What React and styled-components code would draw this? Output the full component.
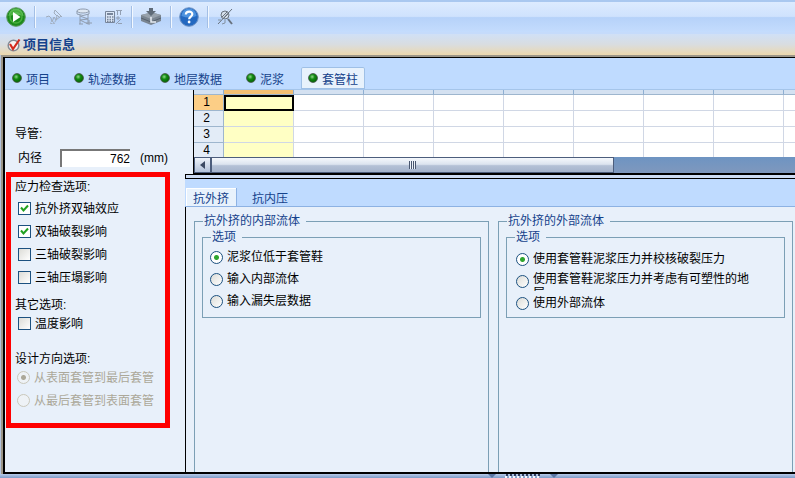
import { useState } from "react";
import styled, { createGlobalStyle } from "styled-components";

const mainTabs = ["项目", "轨迹数据", "地层数据", "泥浆", "套管柱"];
const detailTabs = ["抗外挤", "抗内压"];
const columns = Array.from({ length: 24 }, (_, i) => i);
const rows = [1, 2, 3, 4];

const stressOptions = [
  { id: "biaxial-collapse", label: "抗外挤双轴效应", on: true },
  { id: "biaxial-burst", label: "双轴破裂影响", on: true },
  { id: "triaxial-burst", label: "三轴破裂影响", on: false },
  { id: "triaxial-collapse", label: "三轴压塌影响", on: false },
];
const insideFluids = ["泥浆位低于套管鞋", "输入内部流体", "输入漏失层数据"];
const outsideFluids = ["使用套管鞋泥浆压力并校核破裂压力", "使用套管鞋泥浆压力并考虑有可塑性的地层", "使用外部流体"];

function RunIcon() {
  return (
    <svg width="20" height="20" viewBox="0 0 20 20">
      <circle cx="10" cy="10" r="9.3" fill="#1c8a1c" stroke="#5f9a62" />
      <path d="M2.5 9a7.5 7.5 0 0 1 15 0q-7.5-2-15 0z" fill="#5cbb54" />
      <circle cx="10" cy="10" r="6" fill="none" stroke="#49b03e" strokeWidth="1.5" />
      <path d="M7 5l7.5 5L7 15z" fill="#fff" />
    </svg>
  );
}

function PathIcon() {
  return (
    <svg width="18" height="18" viewBox="0 0 18 18" fill="none" stroke="#a0acbc">
      <path d="M1 9l3-1 2 2 1 4 2-5 2 3 1-4" />
      <path d="M10 2l7 7M9 5l3 3M12 7l3 3M16 8l-5 4M10 2l-1 3" />
      <path d="M5 15l3 1 1-3M11 12l-2 4" strokeDasharray="2 1" />
    </svg>
  );
}

function WellIcon() {
  return (
    <svg width="18" height="18" viewBox="0 0 18 18" fill="none" stroke="#8f9cae">
      <ellipse cx="8" cy="3" rx="6" ry="2" fill="#dfe8f3" />
      <path d="M2 3v3q6 3 12 0V3M5 7v9M13 6v10" />
      <path d="M5 8l8 3M5 12l8-1M5 12l8 4M4 16h4" />
      <path d="M14 12v5M11 15h6" />
    </svg>
  );
}

function CalcIcon() {
  return (
    <svg width="18" height="18" viewBox="0 0 18 18" fill="none" stroke="#77859a">
      <path d="M.5 3.500h9v11h-9z" fill="#dce7f6" />
      <path d="M2 6h6" strokeWidth="2" />
      <path d="M2 9h7M2 11.500h7M2 13.500h7" strokeWidth="1.500" strokeDasharray="1.500 1" />
      <path d="M11 2.500h6M12.500 3v4M15.500 3v4M11 10h4M13 8v4M11 16l5-5M13 15.500h4" stroke="#93a0b3" />
    </svg>
  );
}

function RigIcon() {
  return (
    <svg width="22" height="20" viewBox="0 0 22 20">
      <path d="M1 8l8-2h5l7 2v6l-10 4-10-4z" fill="#7a8591" />
      <path d="M1 8l8-2h5l7 2-10 4z" fill="#98a2ac" />
      <path d="M1 11l10 4 10-4" fill="none" stroke="#56616d" />
      <path d="M9 1h4v3h3l-5 5-5-5h3z" fill="#5f6b78" />
      <path d="M11 10v5h5" fill="none" stroke="#e7edf3" strokeWidth="1.5" />
    </svg>
  );
}

function HelpIcon() {
  return (
    <svg width="20" height="20" viewBox="0 0 20 20">
      <circle cx="10" cy="10" r="9.3" fill="#2368c0" stroke="#6f93c4" />
      <path d="M2.5 9a7.5 7.5 0 0 1 15 0q-7 3-15 0z" fill="#4d92de" />
      <path d="M6.8 7.500C7 3.500 13.500 3.700 13.300 7.300c-.1 2.200-3.200 2.400-3.200 5" fill="none" stroke="#fff" strokeWidth="2.2" />
      <circle cx="10.1" cy="15" r="1.4" fill="#fff" />
    </svg>
  );
}

function ProbeIcon() {
  return (
    <svg width="18" height="18" viewBox="0 0 18 18" fill="none" stroke="#68727e">
      <circle cx="9" cy="7" r="4" fill="#d6e0ec" />
      <path d="M2 16L16 1M6 9l5-5M7 11l5-5" />
      <path d="M12 11l4 5" strokeWidth="2" />
      <path d="M2 12h3M9 12v3l-3 1" stroke="#8491a0" />
    </svg>
  );
}

function CheckMark() {
  return (
    <svg width="14" height="14" viewBox="0 0 14 14">
      <circle cx="6.5" cy="7.5" r="5.3" fill="#f8f4f2" stroke="#858b94" strokeWidth="1.5" />
      <path d="M3 6l3 5 6.5-9.5" fill="none" stroke="#d32b1e" strokeWidth="2.2" />
    </svg>
  );
}

function RadioGroup({ name, options, indent, disabled, defaultValue = 0 }) {
  const [value, setValue] = useState(defaultValue);
  return (
    <Options $indent={indent}>
      {options.map((text, i) => (
        <Option key={text} $tall={disabled} $disabled={disabled}>
          <Radio name={name} checked={value === i} disabled={disabled} onChange={() => setValue(i)} />
          <OptionText>{text}</OptionText>
        </Option>
      ))}
    </Options>
  );
}

export default function App() {
  const [tab, setTab] = useState(4);
  const [detail, setDetail] = useState(0);
  const [diameter, setDiameter] = useState("762");

  return (
    <Page>
      <GlobalStyle />
      <Toolbar>
        <ToolButton aria-label="运行"><RunIcon /></ToolButton>
        <Divider />
        <ToolSet>
          <ToolButton aria-label="轨迹" disabled><PathIcon /></ToolButton>
          <ToolButton aria-label="井身" disabled><WellIcon /></ToolButton>
          <ToolButton aria-label="计算" disabled><CalcIcon /></ToolButton>
        </ToolSet>
        <Divider />
        <ToolButton aria-label="钻机"><RigIcon /></ToolButton>
        <Divider />
        <ToolButton aria-label="帮助"><HelpIcon /></ToolButton>
        <Divider />
        <ToolButton aria-label="检测"><ProbeIcon /></ToolButton>
      </Toolbar>
      <TitleBar>
        <CheckMark />
        <Title>项目信息</Title>
      </TitleBar>

      <Frame>
        <Workspace>
          <MainTabs>
            {mainTabs.map((name, i) => (
              <MainTab key={name} $active={tab === i} onClick={() => setTab(i)}>
                <Dot />
                {name}
              </MainTab>
            ))}
          </MainTabs>

          <Body>
            <Sidebar>
              <Conductor>
                <Heading>导管:</Heading>
                <Field>
                  <FieldLabel htmlFor="diameter">内径</FieldLabel>
                  <NumberInput id="diameter" value={diameter} onChange={(e) => setDiameter(e.target.value)} />
                  <span>(mm)</span>
                </Field>
              </Conductor>

              <Marked>
                <Heading $after={3}>应力检查选项:</Heading>
                {stressOptions.map((o) => (
                  <CheckRow key={o.id}>
                    <Checkbox id={o.id} defaultChecked={o.on} />
                    {o.label}
                  </CheckRow>
                ))}
                <Heading $before={9}>其它选项:</Heading>
                <CheckRow>
                  <Checkbox />
                  温度影响
                </CheckRow>
                <Heading $before={17}>设计方向选项:</Heading>
                <RadioGroup name="direction" indent={2} disabled options={["从表面套管到最后套管", "从最后套管到表面套管"]} />
              </Marked>
            </Sidebar>

            <Main>
              <Sheet>
                <SheetView>
                  <Table>
                    <colgroup>
                      <NumberCol />
                      {columns.map((c) => <DataCol key={c} />)}
                    </colgroup>
                    <thead>
                      <tr>
                        <ColHead />
                        {columns.map((c) => <ColHead key={c} $active={c === 0} />)}
                      </tr>
                    </thead>
                    <tbody>
                      {rows.map((r) => (
                        <tr key={r}>
                          <RowHead $active={r === 1}>{r}</RowHead>
                          {columns.map((c) => <Cell key={c} $column={c === 0} $selected={c === 0 && r === 1} />)}
                        </tr>
                      ))}
                    </tbody>
                  </Table>
                </SheetView>
                <ScrollBar>
                  <ScrollArrow aria-label="向左滚动">
                    <svg width="6" height="8" viewBox="0 0 6 8"><path d="M5 0v8L0 4z" fill="#3c4a63" /></svg>
                  </ScrollArrow>
                  <Thumb>
                    <Grip />
                  </Thumb>
                </ScrollBar>
              </Sheet>

              <Splitter />
              <DetailTabs>
                {detailTabs.map((name, i) => (
                  <DetailTab key={name} $active={detail === i} onClick={() => setDetail(i)}>{name}</DetailTab>
                ))}
              </DetailTabs>
              <Detail>
                <OuterGroup>
                  <Legend>抗外挤的内部流体</Legend>
                  <InnerGroup $top={1}>
                    <Legend $inner>选项</Legend>
                    <RadioGroup name="inside" indent={7} options={insideFluids} />
                  </InnerGroup>
                </OuterGroup>
                <OuterGroup>
                  <Legend>抗外挤的外部流体</Legend>
                  <InnerGroup $top={3}>
                    <Legend $inner>选项</Legend>
                    <RadioGroup name="outside" indent={9} options={outsideFluids} />
                  </InnerGroup>
                </OuterGroup>
              </Detail>
            </Main>
          </Body>
        </Workspace>
      </Frame>
      <BottomBar>
        <svg width="70" height="4" viewBox="0 0 70 4">
          <path d="M0 0h8L4 4zM62 0h8l-4 4z" fill="#5b76a3" />
          <path d="M18 1h34" stroke="#2f3d5c" strokeWidth="2" strokeDasharray="2 2" />
          <path d="M17 3h34" stroke="#f4f8ff" strokeWidth="2" strokeDasharray="2 2" />
        </svg>
      </BottomBar>
    </Page>
  );
}

const GlobalStyle = createGlobalStyle`
  * { box-sizing: border-box; }
  body { margin: 0; overflow: hidden; }
  body, button, input { font-family: "Liberation Sans", "Noto Sans CJK SC", sans-serif; font-size: 12px; }
`;

const Page = styled.div`
  display: flex; flex-direction: column; min-height: 100vh; background: #c3d9f7; color: #000; line-height: 14px;
`;

const Toolbar = styled.div`
  display: flex; align-items: center; height: 34px; padding-left: 6px;
  border-top: 2px solid #a9c8f0; border-bottom: 2px solid #c5dbfb;
  background: linear-gradient(#dcebff 0%, #cfe2fd 48%, #b6d2f9 52%, #c4dcfd 100%);
`;
const ToolButton = styled.button`
  display: flex; align-items: center; justify-content: center; height: 22px; padding: 0; border: none; background: none;
`;
const ToolSet = styled.div`display: flex; gap: 12px; padding-left: 2px;`;
const Divider = styled.span`width: 2px; height: 22px; margin: 0 7px 0 8px; background: #a3bfe6; border-right: 1px solid #f2f8ff;`;

const TitleBar = styled.header`
  display: flex; align-items: center; gap: 2px; height: 21px; padding-left: 7px; background: linear-gradient(#d0e0f6, #d9dde0 50%, #ecd8ae);
`;
const Title = styled.h1`margin: 0; font-size: 13px; line-height: 20px; font-weight: bold; color: #15428b;`;

const Frame = styled.div`
  flex: 1; display: flex; padding-left: 2px; background: #b5c4dd;
`;
const Workspace = styled.div`
  flex: 1; min-width: 0; display: flex; flex-direction: column; background: #e8f0fa;
  border-top: 1px solid #000; border-left: 2px solid #000; border-bottom: 2px solid #000;
  outline: 2px solid #9c9688; margin: 2px 0 0 1px;
`;

const MainTabs = styled.nav`
  display: flex; align-items: flex-end; gap: 10px; height: 32px; background: #bfdbff; border-bottom: 1px solid #a5c5ea;
`;
const MainTab = styled.button`
  display: flex; align-items: center; gap: 4px; height: 22px; padding: 0 7px; border: none; border-radius: 2px 2px 0 0; color: #15428b;
  background: ${(p) => (p.$active ? "#e8f2fc" : "none")};
  box-shadow: ${(p) => (p.$active ? "inset 0 0 0 1px #9fc0e6" : "none")};
`;
const Dot = styled.i`
  width: 10px; height: 10px; border: 1px solid #4f6757; border-radius: 50%; background: radial-gradient(circle at 40% 35%, #8fd88a 0, #128a12 35%, #046004 80%);
`;

const Body = styled.div`flex: 1; display: flex;`;
const Sidebar = styled.aside`flex: 0 0 180px;`;
const Conductor = styled.section`padding: 37px 0 5px 10px;`;
const Heading = styled.h2`
  margin: ${(p) => p.$before || 0}px 0 ${(p) => p.$after || 0}px; font-size: 12px; line-height: 14px; font-weight: normal;
`;
const Field = styled.div`display: flex; align-items: center; gap: 10px; margin-top: 8px; padding-left: 3px;`;
const FieldLabel = styled.label`width: 32px;`;
const NumberInput = styled.input`
  width: 70px; height: 18px; padding: 0; text-align: right; background: #fff; outline: none;
  border: solid #777; border-width: 2px 0 0 2px;
`;

/* red frame round the check options */
const Marked = styled.section`
  margin: 0 15px 0 1px; padding: 3px 0 11px 4px; border: 5px solid #f00;
`;
const CheckRow = styled.label`display: flex; align-items: center; gap: 4px; height: 23px; padding-left: 3px;`;
const Checkbox = styled.input.attrs({ type: "checkbox" })`
  appearance: none; width: 13px; height: 13px; margin: 0; border: 1px solid #1c5180; background: linear-gradient(135deg, #dcdcd7, #fff);
  &:checked {
    background: #fff url("data:image/svg+xml,%3Csvg xmlns='http://www.w3.org/2000/svg' viewBox='0 0 11 11'%3E%3Cpath d='M2 4.5l2.5 3L9 2.5' fill='none' stroke='%2321a121' stroke-width='2'/%3E%3C/svg%3E");
  }
`;

const Options = styled.div`padding-left: ${(p) => p.$indent}px;`;
const Option = styled.label`
  display: flex; align-items: center; gap: 4px; height: ${(p) => (p.$tall ? 23 : 22)}px; color: ${(p) => (p.$disabled ? "#aca899" : "#000")};
`;
const Radio = styled.input.attrs({ type: "radio" })`
  appearance: none; flex: none; width: 13px; height: 13px; margin: 0; border: 1px solid #1c5180; border-radius: 50%; background: linear-gradient(135deg, #dcdcd7, #fff);
  &:checked { background: radial-gradient(circle, #2fa52f 0, #2fa52f 2px, #fff 3px); }
  &:disabled { border-color: #cac8bb; background: #eef2f6; }
  &:disabled:checked { background: radial-gradient(circle, #aca899 0, #aca899 2px, #eef2f6 3px); }
`;
const OptionText = styled.span`max-width: 224px; max-height: 19px; overflow: hidden;`;

const Main = styled.main`flex: 1; min-width: 0; display: flex; flex-direction: column;`;
const Sheet = styled.section`margin-left: 8px; border-left: 1px solid #000; border-bottom: 1px solid #000;`;
const SheetView = styled.div`height: 67px; overflow: hidden; background: #fff;`;
const Table = styled.table`width: 1710px; table-layout: fixed; border-collapse: separate; border-spacing: 0;`;
const NumberCol = styled.col`width: 30px;`;
const DataCol = styled.col`width: 70px;`;
const ColHead = styled.th`
  height: 5px; padding: 0; border-right: 1px solid #8eafd2; border-bottom: 1px solid #9eb6ce; background: ${(p) => (p.$active ? "#f3bf73" : "#d4e1f1")};
`;
const RowHead = styled.th`
  height: 16px; padding: 0 4px 0 0; line-height: 15px; font-weight: normal; border-right: 1px solid #9eb6ce; border-bottom: 1px solid #9eb6ce;
  background: ${(p) => (p.$active ? "#fcce86" : "#e3ecf7")};
`;
const Cell = styled.td`
  height: 16px; padding: 0; border: solid #d0d7e5; border-width: 0 1px 1px 0; background: ${(p) => (p.$column ? "#ffffc4" : "#fff")};
  ${(p) => p.$selected && "border: 2px solid #000;"}
`;

const ScrollBar = styled.div`display: flex; height: 16px; background: linear-gradient(#6e94c2, #7f98bd);`;
const ScrollArrow = styled.button`
  display: flex; align-items: center; justify-content: center; width: 17px; padding: 0; border: 1px solid #4c5d7c; background: linear-gradient(#eef3fa, #b3c2da);
`;
const Thumb = styled.div`
  width: 67%; display: flex; align-items: center; justify-content: center; border: 1px solid #4c5d7c;
  background: linear-gradient(#f5f8fc, #dce4ef 45%, #b4c1d6 55%, #a5b4cc);
`;
const Grip = styled.i`width: 7px; height: 8px; background: repeating-linear-gradient(90deg, #48566f 0 1px, #eef3fa 1px 2px);`;

const Splitter = styled.div`height: 5px; border: solid #000; border-width: 1px 0 1px 1px; background: #cddcf3;`;
const DetailTabs = styled.nav`
  display: flex; align-items: flex-end; gap: 9px; height: 28px; padding-left: 1px; background: #bfdbff; border-bottom: 1px solid #8db2e3;
`;
const DetailTab = styled.button`
  height: 18px; padding: 0 7px; border: none; color: #15428b; background: ${(p) => (p.$active ? "#e8f2fc" : "none")};
  box-shadow: ${(p) => (p.$active ? "inset 1px 1px #fff, 1px 0 #8db2e3" : "none")};
`;
const Detail = styled.div`flex: 1; display: flex; gap: 9px; padding: 6px 2px 0 8px; border-left: 1px solid #000;`;
const OuterGroup = styled.fieldset`
  flex: 1; min-width: 0; margin: 0; padding: 0 7px; border: 1px solid #7c9fb5; border-bottom: none;
`;
const InnerGroup = styled.fieldset`
  min-width: 0; margin: 0; padding: ${(p) => p.$top}px 0 ${(p) => 6 - p.$top}px; border: 1px solid #7c9fb5;
`;
const Legend = styled.legend`
  margin-left: ${(p) => (p.$inner ? 8 : 1)}px; padding: 0 6px 0 1px; line-height: 16px; color: #15428b;
`;

const BottomBar = styled.footer`
  display: flex; justify-content: flex-end; height: 4px; padding-right: 237px; background: linear-gradient(#b8cbe9, #7e9cc8);
`;
